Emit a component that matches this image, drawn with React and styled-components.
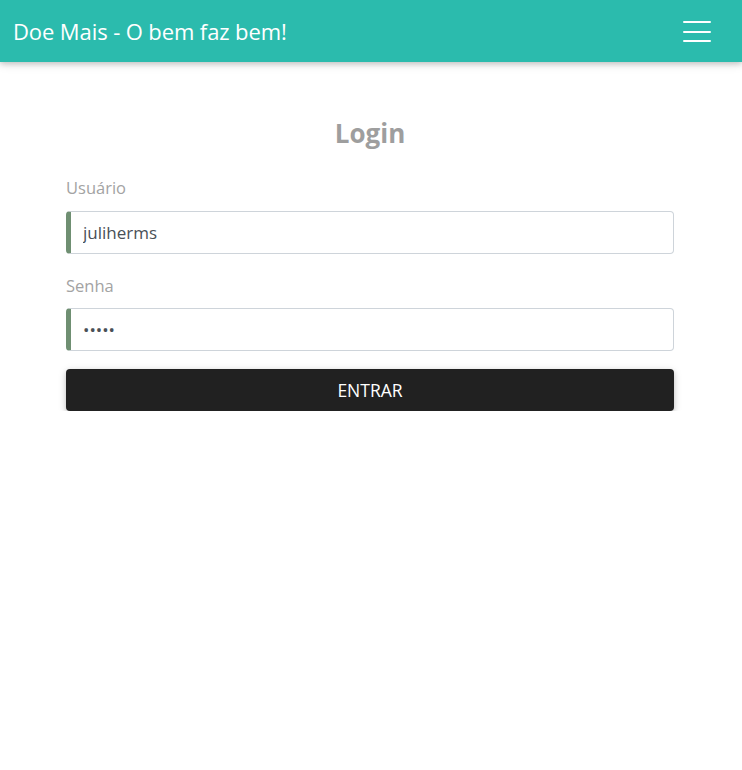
import React from "react";
import styled, { createGlobalStyle } from "styled-components";

const Global = createGlobalStyle`
  html, body { margin: 0; padding: 0; background: #fff; }
  body { font-family: "Open Sans", "Noto Sans", sans-serif; }
  * { box-sizing: border-box; }
`;

const NavBar = styled.header`
  height: 62px;
  background: #2bbbad;
  display: flex;
  align-items: center;
  justify-content: space-between;
  padding: 0 31px 0 13px;
  box-shadow: 0 2px 5px 0 rgba(0,0,0,0.16), 0 2px 10px 0 rgba(0,0,0,0.12);
`;

const Brand = styled.div`
  color: #fff;
  font-size: 22px;
  letter-spacing: -0.1px;
`;

const Burger = styled.button`
  background: none;
  border: 0;
  padding: 0;
  width: 28px;
  height: 21px;
  margin-top: 1px;
  display: flex;
  flex-direction: column;
  justify-content: space-between;
  cursor: pointer;
`;

const BurgerLine = styled.span`
  display: block;
  height: 2px;
  background: #fff;
  border-radius: 1px;
`;

const Container = styled.main`
  padding: 55px 68px 0 66px;
  display: flex;
  flex-direction: column;
`;

const Title = styled.h1`
  margin: 0 0 27px;
  text-align: center;
  color: #9e9e9e;
  font-size: 26px;
  font-weight: 700;
  line-height: 32px;
`;

const Label = styled.label`
  color: #a3a3a3;
  font-size: 16.5px;
  line-height: 24px;
  margin-bottom: ${(p) => p.$mb}px;
`;

const Input = styled.input`
  height: 43px;
  border: 1px solid #ced4da;
  border-left: 5px solid #6f8f72;
  border-radius: 4px;
  padding: 0 12px;
  font-family: inherit;
  font-size: 17px;
  color: #495057;
  margin-bottom: ${(p) => p.$mb}px;
  outline: none;
`;

const Button = styled.button`
  height: 42px;
  background: #212121;
  color: #fff;
  border: 0;
  border-radius: 4px;
  font-family: inherit;
  font-size: 17.5px;
  text-transform: uppercase;
  box-shadow: 0 2px 5px 0 rgba(0,0,0,0.16), 0 2px 10px 0 rgba(0,0,0,0.12);
  cursor: pointer;
`;

export default function App() {
  return (
    <>
      <Global />
      <NavBar>
        <Brand>Doe Mais - O bem faz bem!</Brand>
        <Burger aria-label="menu">
          <BurgerLine />
          <BurgerLine />
          <BurgerLine />
        </Burger>
      </NavBar>
      <Container>
        <Title>Login</Title>
        <Label $mb={11}>Usuário</Label>
        <Input $mb={20} defaultValue="juliherms" />
        <Label $mb={10}>Senha</Label>
        <Input $mb={18} type="password" defaultValue="12345" />
        <Button>Entrar</Button>
      </Container>
    </>
  );
}
